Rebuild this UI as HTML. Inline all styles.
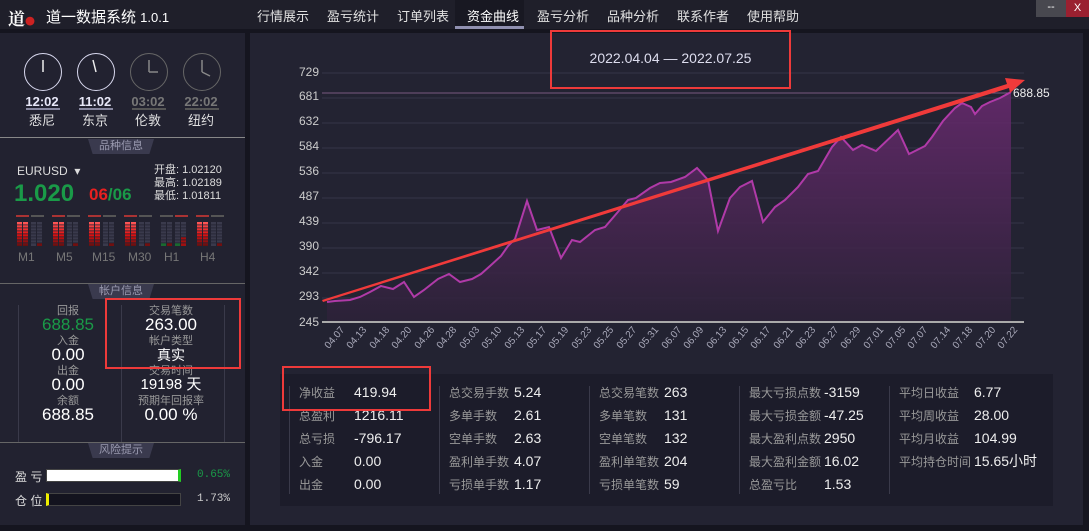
<!DOCTYPE html>
<html><head><meta charset="utf-8">
<style>
*{margin:0;padding:0;box-sizing:border-box}
body{width:1089px;height:531px;background:#15151f;font-family:"Liberation Sans","Noto Sans CJK SC",sans-serif;color:#ddd;position:relative;overflow:hidden}
.a{position:absolute}
.top{left:0;top:0;width:1089px;height:29px;background:#1f1f2a}
.nav span{position:absolute;top:6px;font-size:13px;color:#e0e0e0}
.side{left:0;top:33px;width:245px;height:492px;background:#222230}
.main{left:250px;top:33px;width:833px;height:492px;background:#232332}
.hd{position:absolute;left:88px;width:66px;height:15px;background:#3a3a4e;clip-path:polygon(0 0,100% 0,93% 100%,7% 100%);font-size:11px;color:#9a9ab0;text-align:center;line-height:15px}
.clk{position:absolute;top:53px;width:38px;height:38px;border-radius:50%;border:1.5px solid #d8d8ee}
.ct{position:absolute;top:94px;width:40px;text-align:center;font-size:13px;font-weight:bold;color:#e8e8f8}
.cn{position:absolute;top:110px;width:40px;text-align:center;font-size:13px;color:#e0e0e0}
.lb{font-size:11px;color:#999;text-align:center;position:absolute;width:110px;line-height:12px}
.vl{font-size:17px;color:#fff;text-align:center;position:absolute;width:110px;line-height:18px}
.st{font-size:12px;position:absolute;line-height:15px}
.k{color:#999}.v{color:#eee;font-size:14px!important}
</style></head><body>
<div class="a top"></div>
<div class="a" style="left:0;top:29px;width:1089px;height:4px;background:#15151f"></div>
<div class="a" style="left:8px;top:5px;font-size:17px;font-weight:bold;color:#fff;font-family:'Noto Serif CJK SC',serif">道<span style="color:#c22;font-size:10px">●</span></div>
<div class="a" style="left:46px;top:6px;font-size:15px;color:#fff">道一数据系统 <span style="font-size:13px">1.0.1</span></div>
<div class="a" style="left:455px;top:0;width:69px;height:29px;background:#181822;border-bottom:3px solid #9090b0"></div>
<div class="nav">
<span style="left:257px">行情展示</span><span style="left:327px">盈亏统计</span><span style="left:397px">订单列表</span>
<span style="left:467px;color:#fff">资金曲线</span><span style="left:537px">盈亏分析</span><span style="left:607px">品种分析</span><span style="left:677px">联系作者</span><span style="left:747px">使用帮助</span>
</div>
<div class="a" style="left:1036px;top:0;width:30px;height:17px;background:#48484f;color:#fff;font-size:11px;text-align:center;line-height:14px">--</div>
<div class="a" style="left:1066px;top:0;width:23px;height:17px;background:#9a2030;color:#fff;font-size:11px;text-align:center;line-height:16px">X</div>

<div class="a side"></div>
<div class="a" style="left:0;top:137px;width:245px;height:1px;background:#888"></div>
<div class="a" style="left:0;top:283px;width:245px;height:1px;background:#666"></div>
<div class="a" style="left:0;top:442px;width:245px;height:1px;background:#666"></div>

<div class="clk" style="left:24px"></div><div class="clk" style="left:77px"></div>
<div class="clk" style="left:130px;border-color:#666"></div><div class="clk" style="left:183px;border-color:#666"></div>
<svg class="a" style="left:0;top:0" width="245" height="140">
<g stroke="#eee" stroke-width="1.5"><line x1="43" y1="72" x2="43" y2="60"/><line x1="96" y1="72" x2="93" y2="60"/></g>
<g stroke="#888" stroke-width="1.5"><line x1="149" y1="72" x2="149" y2="60"/><line x1="149" y1="72" x2="158" y2="72"/><line x1="202" y1="72" x2="202" y2="60"/><line x1="202" y1="72" x2="210" y2="76"/></g>
<g fill="#8888a0"><rect x="26" y="108" width="34" height="2"/><rect x="79" y="108" width="34" height="2"/></g>
<g fill="#555"><rect x="132" y="108" width="34" height="2"/><rect x="185" y="108" width="34" height="2"/></g>
</svg>
<div class="ct" style="left:22px">12:02</div><div class="ct" style="left:75px">11:02</div>
<div class="ct" style="left:128px;color:#777">03:02</div><div class="ct" style="left:181px;color:#777">22:02</div>
<div class="cn" style="left:22px">悉尼</div><div class="cn" style="left:75px">东京</div><div class="cn" style="left:128px">伦敦</div><div class="cn" style="left:181px">纽约</div>

<div class="hd" style="top:139px">品种信息</div>
<div class="a" style="left:17px;top:164px;font-size:12px;color:#ddd">EURUSD &nbsp;▾</div>
<div class="a" style="left:14px;top:180px;font-size:24px;font-weight:bold;color:#1a9a48">1.020</div>
<div class="a" style="left:89px;top:185px;font-size:17px;font-weight:bold;color:#e82020">06<span style="color:#1a9a48">/06</span></div>
<div class="a" style="left:154px;top:164px;font-size:11px;color:#ddd;line-height:13px">开盘: 1.02120<br>最高: 1.02189<br>最低: 1.01811</div>
<svg class="a" style="left:0;top:210px" width="245" height="40">
<defs>
<linearGradient id="rg" x1="0" y1="0" x2="0" y2="1"><stop offset="0" stop-color="#ff5a5a"/><stop offset="0.55" stop-color="#e01010"/><stop offset="1" stop-color="#601010"/></linearGradient>
</defs>
<g id="m">
<rect x="16" y="5" width="13" height="2" fill="#a33"/><rect x="31" y="5" width="13" height="2" fill="#555"/>
<rect x="17" y="12" width="5" height="24" fill="url(#rg)"/><rect x="23" y="12" width="5" height="24" fill="url(#rg)"/>
<rect x="31" y="12" width="5" height="24" fill="#3a3a4c"/><rect x="37" y="12" width="5" height="24" fill="#3a3a4c"/><rect x="37" y="33" width="5" height="3" fill="#701010"/>
</g>
<use href="#m" x="36"/><use href="#m" x="72"/><use href="#m" x="108"/><use href="#m" x="180"/>
<rect x="160" y="5" width="13" height="2" fill="#555"/><rect x="175" y="5" width="13" height="2" fill="#a33"/>
<rect x="161" y="12" width="5" height="24" fill="#3a3a4c"/><rect x="167" y="12" width="5" height="24" fill="#3a3a4c"/>
<rect x="175" y="12" width="5" height="24" fill="#3a3a4c"/><rect x="181" y="12" width="5" height="24" fill="#3a3a4c"/>
<rect x="161" y="33" width="5" height="3" fill="#1a6a30"/><rect x="175" y="33" width="5" height="3" fill="#1a6a30"/><rect x="181" y="27" width="5" height="9" fill="#a01010"/><rect x="167" y="33" width="5" height="3" fill="#701010"/>
<g fill="#222230"><rect x="0" y="14.5" width="245" height="0.8"/><rect x="0" y="17.5" width="245" height="0.8"/><rect x="0" y="20.5" width="245" height="0.8"/><rect x="0" y="23.5" width="245" height="0.8"/><rect x="0" y="26.5" width="245" height="0.8"/><rect x="0" y="29.5" width="245" height="0.8"/><rect x="0" y="32.5" width="245" height="0.8"/></g>
</svg>
<div class="a" style="left:18px;top:250px;font-size:12px;color:#777">M1</div>
<div class="a" style="left:56px;top:250px;font-size:12px;color:#777">M5</div>
<div class="a" style="left:92px;top:250px;font-size:12px;color:#777">M15</div>
<div class="a" style="left:128px;top:250px;font-size:12px;color:#777">M30</div>
<div class="a" style="left:164px;top:250px;font-size:12px;color:#777">H1</div>
<div class="a" style="left:200px;top:250px;font-size:12px;color:#777">H4</div>

<div class="hd" style="top:284px">帐户信息</div>
<div class="a" style="left:18px;top:305px;width:1px;height:137px;background:#3a3a4a"></div>
<div class="a" style="left:121px;top:305px;width:1px;height:137px;background:#3a3a4a"></div>
<div class="a" style="left:224px;top:305px;width:1px;height:137px;background:#3a3a4a"></div>
<div class="lb" style="left:13px;top:305px">回报</div><div class="vl" style="left:13px;top:316px;color:#1a9a48">688.85</div>
<div class="lb" style="left:13px;top:335px">入金</div><div class="vl" style="left:13px;top:346px">0.00</div>
<div class="lb" style="left:13px;top:365px">出金</div><div class="vl" style="left:13px;top:376px">0.00</div>
<div class="lb" style="left:13px;top:395px">余额</div><div class="vl" style="left:13px;top:406px">688.85</div>
<div class="lb" style="left:116px;top:305px">交易笔数</div><div class="vl" style="left:116px;top:316px">263.00</div>
<div class="lb" style="left:116px;top:335px">帐户类型</div><div class="vl" style="left:116px;top:346px;font-size:14px">真实</div>
<div class="lb" style="left:116px;top:365px">交易时间</div><div class="vl" style="left:116px;top:376px;font-size:15px">19198 天</div>
<div class="lb" style="left:116px;top:395px">预期年回报率</div><div class="vl" style="left:116px;top:406px">0.00 %</div>
<div class="a" style="left:105px;top:298px;width:136px;height:71px;border:2px solid #ee3a3a"></div>

<div class="hd" style="top:443px">风险提示</div>
<div class="a" style="left:15px;top:468px;font-size:12px;color:#ddd">盈 亏</div>
<div class="a" style="left:46px;top:469px;width:135px;height:13px;background:#fff;border:1px solid #444;border-right:3px solid #2c2"></div>
<div class="a" style="left:197px;top:469px;font-size:11px;color:#1a9a48;font-family:'Liberation Mono',monospace">0.65%</div>
<div class="a" style="left:15px;top:492px;font-size:12px;color:#ddd">仓 位</div>
<div class="a" style="left:46px;top:493px;width:135px;height:13px;background:#13131e;border:1px solid #444;border-left:3px solid #ee0"></div>
<div class="a" style="left:197px;top:493px;font-size:11px;color:#ccc;font-family:'Liberation Mono',monospace">1.73%</div>

<div class="a main"></div>
<svg class="a" style="left:0;top:0" width="1089" height="370">
<defs><linearGradient id="pg" x1="0" y1="0" x2="0" y2="1"><stop offset="0" stop-color="#6a2a70"/><stop offset="1" stop-color="#2c2238"/></linearGradient></defs>
<g stroke="#353548" stroke-width="1">
<line x1="322" y1="73" x2="1024" y2="73"/><line x1="322" y1="98" x2="1024" y2="98"/><line x1="322" y1="123" x2="1024" y2="123"/><line x1="322" y1="148" x2="1024" y2="148"/><line x1="322" y1="173" x2="1024" y2="173"/><line x1="322" y1="198" x2="1024" y2="198"/><line x1="322" y1="223" x2="1024" y2="223"/><line x1="322" y1="248" x2="1024" y2="248"/><line x1="322" y1="273" x2="1024" y2="273"/><line x1="322" y1="298" x2="1024" y2="298"/></g>
<line x1="322" y1="93" x2="1010" y2="93" stroke="#7a5a80"/>
<polygon fill="url(#pg)" opacity="0.85" points="327,322 327,302 335,301 350,300 360,297 370,292 381,286 393,289 404,282 414,297 424,290 438,279 449,274 460,282 472,279 481,274 490,266 501,256 508,246 515,239 527,201 537,230 549,227 561,258 572,240 580,242 595,230 605,227 617,213 628,200 636,198 650,188 660,183 671,182 685,177 697,168 708,180 718,231 730,198 740,187 752,181 763,222 775,207 785,200 798,187 808,174 818,171 832,147 841,137 853,150 862,145 876,151 898,130 909,154 925,146 932,137 943,121 955,108 962,103 971,107 975,114 982,106 990,102 1000,98 1011,92 1011,322"/>
<polyline fill="none" stroke="#b03aa8" stroke-width="2" points="327,302 335,301 350,300 360,297 370,292 381,286 393,289 404,282 414,297 424,290 438,279 449,274 460,282 472,279 481,274 490,266 501,256 508,246 515,239 527,201 537,230 549,227 561,258 572,240 580,242 595,230 605,227 617,213 628,200 636,198 650,188 660,183 671,182 685,177 697,168 708,180 718,231 730,198 740,187 752,181 763,222 775,207 785,200 798,187 808,174 818,171 832,147 841,137 853,150 862,145 876,151 898,130 909,154 925,146 932,137 943,121 955,108 962,103 971,107 975,114 982,106 990,102 1000,98 1011,92"/>
<line x1="322" y1="322" x2="1024" y2="322" stroke="#aaa" stroke-width="2"/>
<polygon fill="#f03a3a" points="322,300 1007,84 1005,78 1025,80 1010,93 1009,88 323,302"/>
<g fill="#ccc" font-size="12" text-anchor="end" font-family="Liberation Sans">
<text x="319" y="76">729</text><text x="319" y="100">681</text><text x="319" y="125">632</text><text x="319" y="150">584</text><text x="319" y="175">536</text><text x="319" y="200">487</text><text x="319" y="225">439</text><text x="319" y="250">390</text><text x="319" y="275">342</text><text x="319" y="300">293</text><text x="319" y="326">245</text></g>
<text x="1013" y="97" fill="#eee" font-size="12" font-family="Liberation Sans">688.85</text>
<g fill="#aab" font-size="10" text-anchor="end" font-family="Liberation Sans">
<text transform="translate(345,330) rotate(-50)">04.07</text><text transform="translate(367,330) rotate(-50)">04.13</text><text transform="translate(390,330) rotate(-50)">04.18</text><text transform="translate(412,330) rotate(-50)">04.20</text><text transform="translate(435,330) rotate(-50)">04.26</text><text transform="translate(457,330) rotate(-50)">04.28</text><text transform="translate(480,330) rotate(-50)">05.03</text><text transform="translate(502,330) rotate(-50)">05.10</text><text transform="translate(525,330) rotate(-50)">05.13</text><text transform="translate(547,330) rotate(-50)">05.17</text><text transform="translate(569,330) rotate(-50)">05.19</text><text transform="translate(592,330) rotate(-50)">05.23</text><text transform="translate(614,330) rotate(-50)">05.25</text><text transform="translate(637,330) rotate(-50)">05.27</text><text transform="translate(659,330) rotate(-50)">05.31</text><text transform="translate(682,330) rotate(-50)">06.07</text><text transform="translate(704,330) rotate(-50)">06.09</text><text transform="translate(727,330) rotate(-50)">06.13</text><text transform="translate(749,330) rotate(-50)">06.15</text><text transform="translate(771,330) rotate(-50)">06.17</text><text transform="translate(794,330) rotate(-50)">06.21</text><text transform="translate(816,330) rotate(-50)">06.23</text><text transform="translate(839,330) rotate(-50)">06.27</text><text transform="translate(861,330) rotate(-50)">06.29</text><text transform="translate(884,330) rotate(-50)">07.01</text><text transform="translate(906,330) rotate(-50)">07.05</text><text transform="translate(928,330) rotate(-50)">07.07</text><text transform="translate(951,330) rotate(-50)">07.14</text><text transform="translate(973,330) rotate(-50)">07.18</text><text transform="translate(996,330) rotate(-50)">07.20</text><text transform="translate(1018,330) rotate(-50)">07.22</text></g>
</svg>
<div class="a" style="left:550px;top:30px;width:241px;height:59px;border:2px solid #ee3a3a"></div>
<div class="a" style="left:550px;top:50px;width:241px;text-align:center;font-size:14px;color:#dde">2022.04.04 — 2022.07.25</div>

<div class="a" style="left:280px;top:374px;width:773px;height:132px;background:#1c1c2a"></div>
<div class="a" style="left:289px;top:386px;width:1px;height:108px;background:#3a3a4a"></div>
<div class="a" style="left:439px;top:386px;width:1px;height:108px;background:#3a3a4a"></div>
<div class="a" style="left:589px;top:386px;width:1px;height:108px;background:#3a3a4a"></div>
<div class="a" style="left:739px;top:386px;width:1px;height:108px;background:#3a3a4a"></div>
<div class="a" style="left:889px;top:386px;width:1px;height:108px;background:#3a3a4a"></div>
<div>
<div class="st k" style="left:299px;top:386px">净收益</div><div class="st v" style="left:354px;top:385px">419.94</div>
<div class="st k" style="left:299px;top:409px">总盈利</div><div class="st v" style="left:354px;top:408px">1216.11</div>
<div class="st k" style="left:299px;top:432px">总亏损</div><div class="st v" style="left:354px;top:431px">-796.17</div>
<div class="st k" style="left:299px;top:455px">入金</div><div class="st v" style="left:354px;top:454px">0.00</div>
<div class="st k" style="left:299px;top:478px">出金</div><div class="st v" style="left:354px;top:477px">0.00</div>
<div class="st k" style="left:449px;top:386px">总交易手数</div><div class="st v" style="left:514px;top:385px">5.24</div>
<div class="st k" style="left:449px;top:409px">多单手数</div><div class="st v" style="left:514px;top:408px">2.61</div>
<div class="st k" style="left:449px;top:432px">空单手数</div><div class="st v" style="left:514px;top:431px">2.63</div>
<div class="st k" style="left:449px;top:455px">盈利单手数</div><div class="st v" style="left:514px;top:454px">4.07</div>
<div class="st k" style="left:449px;top:478px">亏损单手数</div><div class="st v" style="left:514px;top:477px">1.17</div>
<div class="st k" style="left:599px;top:386px">总交易笔数</div><div class="st v" style="left:664px;top:385px">263</div>
<div class="st k" style="left:599px;top:409px">多单笔数</div><div class="st v" style="left:664px;top:408px">131</div>
<div class="st k" style="left:599px;top:432px">空单笔数</div><div class="st v" style="left:664px;top:431px">132</div>
<div class="st k" style="left:599px;top:455px">盈利单笔数</div><div class="st v" style="left:664px;top:454px">204</div>
<div class="st k" style="left:599px;top:478px">亏损单笔数</div><div class="st v" style="left:664px;top:477px">59</div>
<div class="st k" style="left:749px;top:386px">最大亏损点数</div><div class="st v" style="left:824px;top:385px">-3159</div>
<div class="st k" style="left:749px;top:409px">最大亏损金额</div><div class="st v" style="left:824px;top:408px">-47.25</div>
<div class="st k" style="left:749px;top:432px">最大盈利点数</div><div class="st v" style="left:824px;top:431px">2950</div>
<div class="st k" style="left:749px;top:455px">最大盈利金额</div><div class="st v" style="left:824px;top:454px">16.02</div>
<div class="st k" style="left:749px;top:478px">总盈亏比</div><div class="st v" style="left:824px;top:477px">1.53</div>
<div class="st k" style="left:899px;top:386px">平均日收益</div><div class="st v" style="left:974px;top:385px">6.77</div>
<div class="st k" style="left:899px;top:409px">平均周收益</div><div class="st v" style="left:974px;top:408px">28.00</div>
<div class="st k" style="left:899px;top:432px">平均月收益</div><div class="st v" style="left:974px;top:431px">104.99</div>
<div class="st k" style="left:899px;top:455px">平均持仓时间</div><div class="st v" style="left:974px;top:454px">15.65小时</div>
</div>
<div class="a" style="left:282px;top:366px;width:149px;height:45px;border:2px solid #ee3a3a"></div>
</body></html>
